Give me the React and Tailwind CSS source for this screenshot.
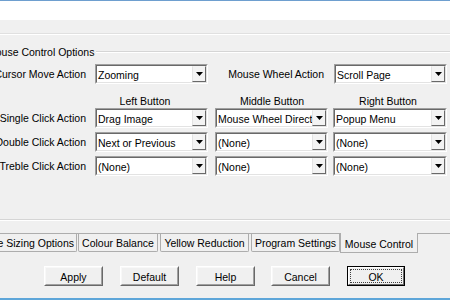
import React from "react";

function Combo({ text, className }) {
  return (
    <div className={`h-[20px] flex border border-t-[#a0a0a0] border-l-[#a0a0a0] border-r-white border-b-white ${className}`}>
      <div className="flex-1 flex min-w-0 border border-t-[#696969] border-l-[#696969] border-r-[#e3e3e3] border-b-[#e3e3e3] bg-white">
        <div className="flex-1 min-w-0 overflow-hidden whitespace-nowrap pl-[1px] pt-[1px] leading-[16px]">{text}</div>
        <div className="w-[14px] flex items-center justify-center border border-t-[#f4f4f4] border-l-[#e3e3e3] border-r-[#696969] border-b-[#696969] bg-[#f3f3f3]">
          <svg width="7" height="4" viewBox="0 0 7 4">
            <polygon points="0,0 7,0 3.5,4" fill="#000" />
          </svg>
        </div>
      </div>
    </div>
  );
}

function Btn({ children, def }) {
  if (def) {
    return (
      <div className="w-[58px] h-[20px] border border-black">
        <div className="h-full border border-t-white border-l-white border-r-[#696969] border-b-[#696969] bg-[#f0f0f0] p-[1px]">
          <div className="h-full border border-dotted border-[#404040] flex items-center justify-center leading-[12px] pt-[1px]">
            {children}
          </div>
        </div>
      </div>
    );
  }
  return (
    <div className="w-[59px] h-[20px] border border-t-white border-l-white border-r-[#696969] border-b-[#696969]">
      <div className="h-full border border-t-[#f8f8f8] border-l-[#f8f8f8] border-r-[#a0a0a0] border-b-[#a0a0a0] bg-[#f0f0f0] flex items-center justify-center leading-[12px] pt-[1px]">
        {children}
      </div>
    </div>
  );
}

function Tab({ children, className }) {
  return (
    <div className={`h-[18px] border-l border-r border-b border-[#adadad] rounded-b-[2px] bg-[#f0f0f0] flex items-center justify-center whitespace-nowrap leading-[13px] pt-[1px] ${className}`}>
      {children}
    </div>
  );
}

export default function App() {
  return (
    <div className="w-[450px] h-[300px] overflow-hidden bg-[#f0f0f0] text-black text-[10.5px] font-['Liberation_Sans',Arial,sans-serif] flex flex-col">
      <div className="h-[1px] bg-[#6e9fcf] shrink-0" />
      <div className="h-[19px] bg-white shrink-0" />
      <div className="h-[13px] shrink-0" />
      <div className="h-[1px] bg-[#e0e0e0] shrink-0" />
      <div className="h-[1px] bg-white shrink-0" />

      {/* group box legend */}
      <div className="mt-[10px] h-[13px] flex items-center shrink-0">
        <div className="-ml-[13px] whitespace-nowrap leading-[13px] pt-[1px]">Mouse Control Options</div>
        <div className="flex-1 ml-[2px] flex flex-col">
          <div className="h-[1px] bg-[#d5d5d5]" />
          <div className="h-[1px] bg-white" />
        </div>
      </div>

      {/* cursor row */}
      <div className="mt-[6px] flex items-center shrink-0">
        <div className="-ml-[20px] w-[106px] text-right whitespace-nowrap pt-[1px]">Cursor Move Action</div>
        <Combo text="Zooming" className="ml-[9px] w-[113px]" />
        <div className="w-[116px] text-right whitespace-nowrap pt-[1px]">Mouse Wheel Action</div>
        <Combo text="Scroll Page" className="ml-[10px] w-[113px]" />
      </div>

      {/* headers */}
      <div className="mt-[10px] h-[13px] flex leading-[13px] shrink-0 pt-[1px]">
        <div className="ml-[95px] w-[100px] text-center whitespace-nowrap">Left Button</div>
        <div className="w-[154px] text-center whitespace-nowrap">Middle Button</div>
        <div className="w-[78px] text-center whitespace-nowrap">Right Button</div>
      </div>

      <div className="mt-[1px] flex flex-col gap-[4px] shrink-0">
        {[
          ["Single Click Action", "Drag Image", "Mouse Wheel Direction", "Popup Menu"],
          ["Double Click Action", "Next or Previous", "(None)", "(None)"],
          ["Treble Click Action", "(None)", "(None)", "(None)"],
        ].map(([label, a, b, c]) => (
          <div key={label} className="flex items-center">
            <div className="-ml-[20px] w-[106px] text-right whitespace-nowrap pt-[1px]">{label}</div>
            <Combo text={a} className="ml-[9px] w-[113px]" />
            <Combo text={b} className="ml-[7px] w-[113px]" />
            <Combo text={c} className="ml-[5px] w-[114px]" />
          </div>
        ))}
      </div>

      {/* group box bottom */}
      <div className="mt-[43px] shrink-0">
        <div className="h-[1px] bg-[#d5d5d5]" />
        <div className="h-[1px] bg-white" />
      </div>

      {/* tab pane bottom + tabs */}
      <div className="mt-[12px] h-[1px] bg-[#adadad] shrink-0" />
      <div className="flex items-start shrink-0">
        <Tab className="-ml-[32px] w-[109px] justify-end pr-[2px]">Image Sizing Options</Tab>
        <Tab className="ml-[1px] w-[80px]">Colour Balance</Tab>
        <Tab className="ml-[2px] w-[89px]">Yellow Reduction</Tab>
        <Tab className="ml-[2px] w-[89px]">Program Settings</Tab>
        <div className="-mt-[1px] w-[78px] h-[20px] border-l border-r border-b border-[#adadad] bg-[#f0f0f0] flex items-center justify-center whitespace-nowrap leading-[13px] pt-[3px]">
          Mouse Control
        </div>
      </div>

      {/* buttons */}
      <div className="mt-[13px] flex items-center shrink-0">
        <div className="ml-[44px]"><Btn>Apply</Btn></div>
        <div className="ml-[17px]"><Btn>Default</Btn></div>
        <div className="ml-[17px]"><Btn>Help</Btn></div>
        <div className="ml-[16px]"><Btn>Cancel</Btn></div>
        <div className="ml-[17px]"><Btn def>OK</Btn></div>
      </div>

      <div className="flex-1" />
      <div className="h-[2px] bg-[#5ea6d9] shrink-0" />
    </div>
  );
}
